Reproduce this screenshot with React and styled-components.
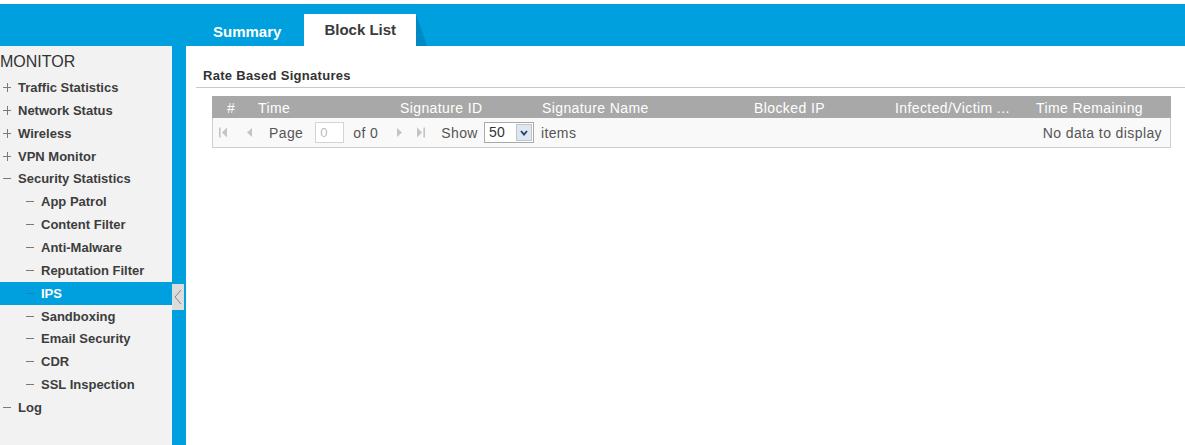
import React from "react";
import styled, { createGlobalStyle } from "styled-components";

const BLUE = "#00a0de";
const FONT = `"Liberation Sans", Arial, sans-serif`;

const GlobalStyle = createGlobalStyle`
  html, body {
    margin: 0;
    padding: 0;
    background: #fff;
    font-family: ${FONT};
  }
`;

const Page = styled.div`
  width: 1185px;
  height: 445px;
  padding-top: 4px;
  box-sizing: border-box;
  display: grid;
  grid-template-rows: 42px 1fr;
  grid-template-columns: 172px 14px 1fr;
  overflow: hidden;
`;

const TopBar = styled.div`
  grid-column: 1 / -1;
  background: ${BLUE};
  display: flex;
  align-items: flex-end;
  padding-left: 193px;
  gap: 3px;
`;

const Tab = styled.div`
  position: relative;
  height: ${(p) => (p.$active ? "32px" : "30px")};
  padding: ${(p) => (p.$active ? "0 20px 2px" : "0 20px")};
  display: flex;
  align-items: center;
  font-size: 15px;
  font-weight: bold;
  color: ${(p) => (p.$active ? "#3a3a3a" : "#fff")};
  background: ${(p) => (p.$active ? "#fff" : "transparent")};
  box-sizing: border-box;

  ${(p) =>
    p.$active &&
    `
    &::after {
      content: "";
      position: absolute;
      left: 100%;
      top: 0;
      width: 11px;
      height: 32px;
      background: #0089c2;
      clip-path: polygon(0 0, 100% 100%, 0 100%);
    }
  `}
`;

const Sidebar = styled.div`
  background: #f2f2f2;
  padding-top: 6px;
`;

const SideTitle = styled.div`
  font-size: 16px;
  color: #333;
  height: 24px;
  line-height: 20px;
`;

const NavItem = styled.div`
  display: flex;
  align-items: center;
  height: 22.86px;
  padding-left: ${(p) => (p.$level ? "26px" : "3px")};
  font-size: 13px;
  font-weight: bold;
  color: ${(p) => (p.$active ? "#fff" : "#3d3d3d")};
  background: ${(p) => (p.$active ? BLUE : "transparent")};
`;

/* thin plus / dash drawn with two 1px bars */
const Marker = styled.span`
  position: relative;
  width: 8px;
  height: 9px;
  margin-right: 7px;
  flex-shrink: 0;

  &::before {
    content: "";
    position: absolute;
    left: 0;
    top: 4px;
    width: 8px;
    height: 1px;
    background: ${(p) => (p.$active ? "#2a7aab" : "#7a7a7a")};
  }

  ${(p) =>
    p.$plus &&
    `
    &::after {
      content: "";
      position: absolute;
      left: 4px;
      top: 0;
      width: 1px;
      height: 9px;
      background: #7a7a7a;
    }
  `}
`;

const Strip = styled.div`
  position: relative;
  background: ${BLUE};
`;

const Handle = styled.div`
  position: absolute;
  left: 0;
  top: 238px;
  width: 12px;
  height: 26px;
  background: #dcdcdc;
  display: flex;
  align-items: center;
  justify-content: center;
`;

const Content = styled.div`
  padding: 22px 0 0 10px;
`;

const SectionTitle = styled.div`
  font-size: 13px;
  font-weight: bold;
  letter-spacing: 0.3px;
  color: #333;
  padding: 0 0 4px 7px;
  border-bottom: 1px solid #c8c8c8;
`;

const Table = styled.div`
  margin: 8px 14px 0 16px;
  border: 1px solid #cfcfcf;
  border-top: none;
`;

const HeadRow = styled.div`
  display: grid;
  grid-template-columns: 40px 142px 142px 212px 141px 141px 1fr;
  height: 22px;
  background: #a8a8a8;
  margin: 0 -1px;
`;

const HeadCell = styled.div`
  display: flex;
  align-items: center;
  padding: 1px 0 0 ${(p) => p.$pad || 6}px;
  font-size: 14px;
  letter-spacing: 0.4px;
  color: #fff;
  white-space: nowrap;
  overflow: hidden;
`;

const Pager = styled.div`
  display: flex;
  align-items: center;
  height: 29px;
  background: #f9f9f9;
  padding-left: 6px;
  font-size: 14px;
  letter-spacing: 0.4px;
  color: #555;
`;

const NavIcon = styled.span`
  display: flex;
  align-items: center;
  margin-right: ${(p) => p.$gap}px;
`;

const Label = styled.span`
  margin-right: ${(p) => p.$gap || 0}px;
`;

const PageInput = styled.div`
  width: 29px;
  height: 21px;
  box-sizing: border-box;
  border: 1px solid #d4d4d4;
  background: #fff;
  color: #bbb;
  font-size: 13px;
  line-height: 19px;
  padding-left: 4px;
  margin-right: 9px;
`;

const Select = styled.div`
  display: flex;
  width: 50px;
  height: 21px;
  box-sizing: border-box;
  border: 1px solid #a9a9a9;
  background: #fff;
  margin-right: 7px;
`;

const SelectValue = styled.span`
  flex: 1;
  padding-left: 4px;
  font-size: 14px;
  line-height: 19px;
  color: #333;
`;

const SelectButton = styled.span`
  width: 16px;
  margin: 1px;
  background: #dfe6ee;
  border: 1px solid #b9c6d6;
  box-sizing: border-box;
  display: flex;
  align-items: center;
  justify-content: center;
`;

const Empty = styled.span`
  margin-left: auto;
  padding-right: 8px;
  color: #555;
`;

const nav = [
  { label: "Traffic Statistics", plus: true },
  { label: "Network Status", plus: true },
  { label: "Wireless", plus: true },
  { label: "VPN Monitor", plus: true },
  { label: "Security Statistics" },
  { label: "App Patrol", level: 1 },
  { label: "Content Filter", level: 1 },
  { label: "Anti-Malware", level: 1 },
  { label: "Reputation Filter", level: 1 },
  { label: "IPS", level: 1, active: true },
  { label: "Sandboxing", level: 1 },
  { label: "Email Security", level: 1 },
  { label: "CDR", level: 1 },
  { label: "SSL Inspection", level: 1 },
  { label: "Log" },
];

const columns = [
  { name: "#", pad: 15 },
  { name: "Time" },
  { name: "Signature ID" },
  { name: "Signature Name" },
  { name: "Blocked IP" },
  { name: "Infected/Victim ..." },
  { name: "Time Remaining" },
];

const Arrow = ({ dir = "left", bar, color }) => (
  <svg width="9" height="11" viewBox="0 0 9 11">
    {dir === "left" ? (
      <>
        {bar && <rect x="0" y="0.5" width="1.6" height="10" fill={color} />}
        <polygon points={bar ? "8,0.5 3,5.5 8,10.5" : "7,1 2,5.5 7,10"} fill={color} />
      </>
    ) : (
      <>
        <polygon points={bar ? "1,0.5 6,5.5 1,10.5" : "2,1 7,5.5 2,10"} fill={color} />
        {bar && <rect x="7.4" y="0.5" width="1.6" height="10" fill={color} />}
      </>
    )}
  </svg>
);

export default function App() {
  return (
    <>
      <GlobalStyle />
      <Page>
        <TopBar>
          <Tab>Summary</Tab>
          <Tab $active>Block List</Tab>
        </TopBar>

        <Sidebar>
          <SideTitle>MONITOR</SideTitle>
          {nav.map((item) => (
            <NavItem key={item.label} $level={item.level} $active={item.active}>
              <Marker $plus={item.plus} $active={item.active} />
              {item.label}
            </NavItem>
          ))}
        </Sidebar>

        <Strip>
          <Handle>
            <svg width="8" height="16" viewBox="0 0 8 16">
              <polyline points="7,1 1,8 7,15" fill="none" stroke="#888" strokeWidth="1" />
            </svg>
          </Handle>
        </Strip>

        <Content>
          <SectionTitle>Rate Based Signatures</SectionTitle>
          <Table>
            <HeadRow>
              {columns.map((c) => (
                <HeadCell key={c.name} $pad={c.pad}>
                  {c.name}
                </HeadCell>
              ))}
            </HeadRow>
            <Pager>
              <NavIcon $gap={17}>
                <Arrow dir="left" bar color="#c4c4c4" />
              </NavIcon>
              <NavIcon $gap={15}>
                <Arrow dir="left" color="#c4c4c4" />
              </NavIcon>
              <Label $gap={12}>Page</Label>
              <PageInput>0</PageInput>
              <Label $gap={17}>of 0</Label>
              <NavIcon $gap={12}>
                <Arrow dir="right" color="#c4c4c4" />
              </NavIcon>
              <NavIcon $gap={16}>
                <Arrow dir="right" bar color="#c4c4c4" />
              </NavIcon>
              <Label $gap={6}>Show</Label>
              <Select>
                <SelectValue>50</SelectValue>
                <SelectButton>
                  <svg width="8" height="6" viewBox="0 0 8 6">
                    <polyline points="1,1 4,4.5 7,1" fill="none" stroke="#1f3f78" strokeWidth="1.8" />
                  </svg>
                </SelectButton>
              </Select>
              <Label>items</Label>
              <Empty>No data to display</Empty>
            </Pager>
          </Table>
        </Content>
      </Page>
    </>
  );
}
